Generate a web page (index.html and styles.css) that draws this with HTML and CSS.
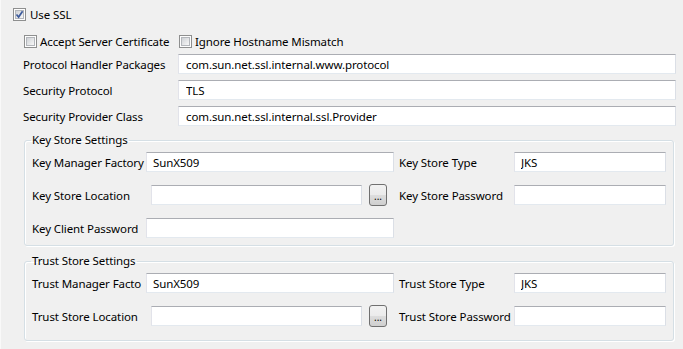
FILE: index.html
```html
<!DOCTYPE html>
<html>
    <head>
        <title>SSL Settings</title>
        <link rel="stylesheet" href="styles.css">
    </head>
    <body>
        <div class="page">
            <label class="check ssl">
                <span class="box">
                    <svg class="tick" width="9" height="9" viewBox="0 0 9 9"><path d="M1.5 4.5 L3.6 7 L7.6 1.2" fill="none" stroke="#3d5b9c" stroke-width="1.7"/></svg>
                </span>
                Use SSL
            </label>

            <div class="options">
                <label class="check first"><span class="box"></span>Accept Server Certificate</label>
                <label class="check"><span class="box"></span>Ignore Hostname Mismatch</label>
            </div>

            <div class="fields">
                <span>Protocol Handler Packages</span>
                <input class="text" type="text" value="com.sun.net.ssl.internal.www.protocol">
                <span>Security Protocol</span>
                <input class="text" type="text" value="TLS">
                <span>Security Provider Class</span>
                <input class="text" type="text" value="com.sun.net.ssl.internal.ssl.Provider">
            </div>

            <fieldset class="group key-group">
                <legend>Key Store Settings</legend>
                <div class="store">
                    <span>Key Manager Factory</span>
                    <input class="text" type="text" value="SunX509">
                    <span class="right">Key Store Type</span>
                    <input class="text" type="text" value="JKS">

                    <span>Key Store Location</span>
                    <div class="browse">
                        <input class="text" type="text" value="">
                        <button class="dots">...</button>
                    </div>
                    <span class="right">Key Store Password</span>
                    <input class="text" type="password" value="">

                    <span>Key Client Password</span>
                    <input class="text" type="password" value="">
                </div>
            </fieldset>

            <fieldset class="group trust-group">
                <legend>Trust Store Settings</legend>
                <div class="store">
                    <span>Trust Manager Facto</span>
                    <input class="text" type="text" value="SunX509">
                    <span class="right">Trust Store Type</span>
                    <input class="text" type="text" value="JKS">

                    <span>Trust Store Location</span>
                    <div class="browse">
                        <input class="text" type="text" value="">
                        <button class="dots">...</button>
                    </div>
                    <span class="right">Trust Store Password</span>
                    <input class="text" type="password" value="">
                </div>
            </fieldset>
        </div>
    </body>
</html>
```

FILE: styles.css
```css
body { margin: 0; background: #f0f0f0; color: #000; font: 11.5px "Noto Sans", sans-serif; letter-spacing: -0.1px; border-left: 1px solid #f9f9f9; height: 349px; box-sizing: border-box; overflow: hidden; }
.page { padding: 8px 0 0 12px; }

/* checkboxes */
.check { display: flex; align-items: center; gap: 3px; height: 13px; line-height: 13px; white-space: nowrap; }
.ssl { gap: 4px; }
.box { position: relative; width: 13px; height: 13px; box-sizing: border-box; border: 1px solid #8e8f8f; background: #fdfdfd; flex: none; }
.box::before { content: ""; position: absolute; left: 1px; top: 1px; width: 9px; height: 9px; box-sizing: border-box; border: 1px solid #b3b6bb; background: linear-gradient(135deg, #cfd2d6, #f7f7f7); }
.tick { position: absolute; left: 1px; top: 1px; }
.options { display: flex; margin: 14px 0 0 11px; }
.options .first { width: 155px; }

/* text fields */
.text { font: 11.5px "Noto Sans", sans-serif; letter-spacing: -0.1px; color: #000; background: #fff; height: 20px; box-sizing: border-box; margin: 0; padding: 0 6px; border: 1px solid; border-color: #abadb3 #dbdfe6 #e3e9ef #e2e3ea; outline: none; width: 100%; }
.fields { display: grid; grid-template-columns: 155px 498px; grid-auto-rows: 20px; row-gap: 6px; align-items: center; margin: 6px 0 0 10px; }
.fields .text { padding-left: 7px; }

/* group boxes */
.group { margin: 6px 0 0 11px; width: 650px; box-sizing: border-box; padding: 4px 7px 7px 7px; border: 1px solid #d5dfe5; border-radius: 3px; box-shadow: inset 1px 1px 0 #fff, 1px 1px 0 #fff; min-inline-size: 0; }
.group legend { padding: 0 1px; margin-left: -1px; line-height: 16px; }
.trust-group { margin-top: 7px; padding-bottom: 14px; }
.store { display: grid; grid-template-columns: 114px 248px 120px 152px; grid-auto-rows: 20px; row-gap: 13px; align-items: center; white-space: nowrap; }
.store .right { margin-left: 5px; }
.browse { display: flex; align-items: center; height: 20px; padding-left: 5px; gap: 7px; }
.browse .text { width: 211px; flex: none; }
.dots { width: 18px; height: 22px; flex: none; padding: 0; border: 1px solid #707070; border-radius: 3px; background: linear-gradient(#f2f2f2, #ebebeb 50%, #dddddd 51%, #cfcfcf); font: 10px "Noto Sans", sans-serif; line-height: 22px; color: #000; }
```
